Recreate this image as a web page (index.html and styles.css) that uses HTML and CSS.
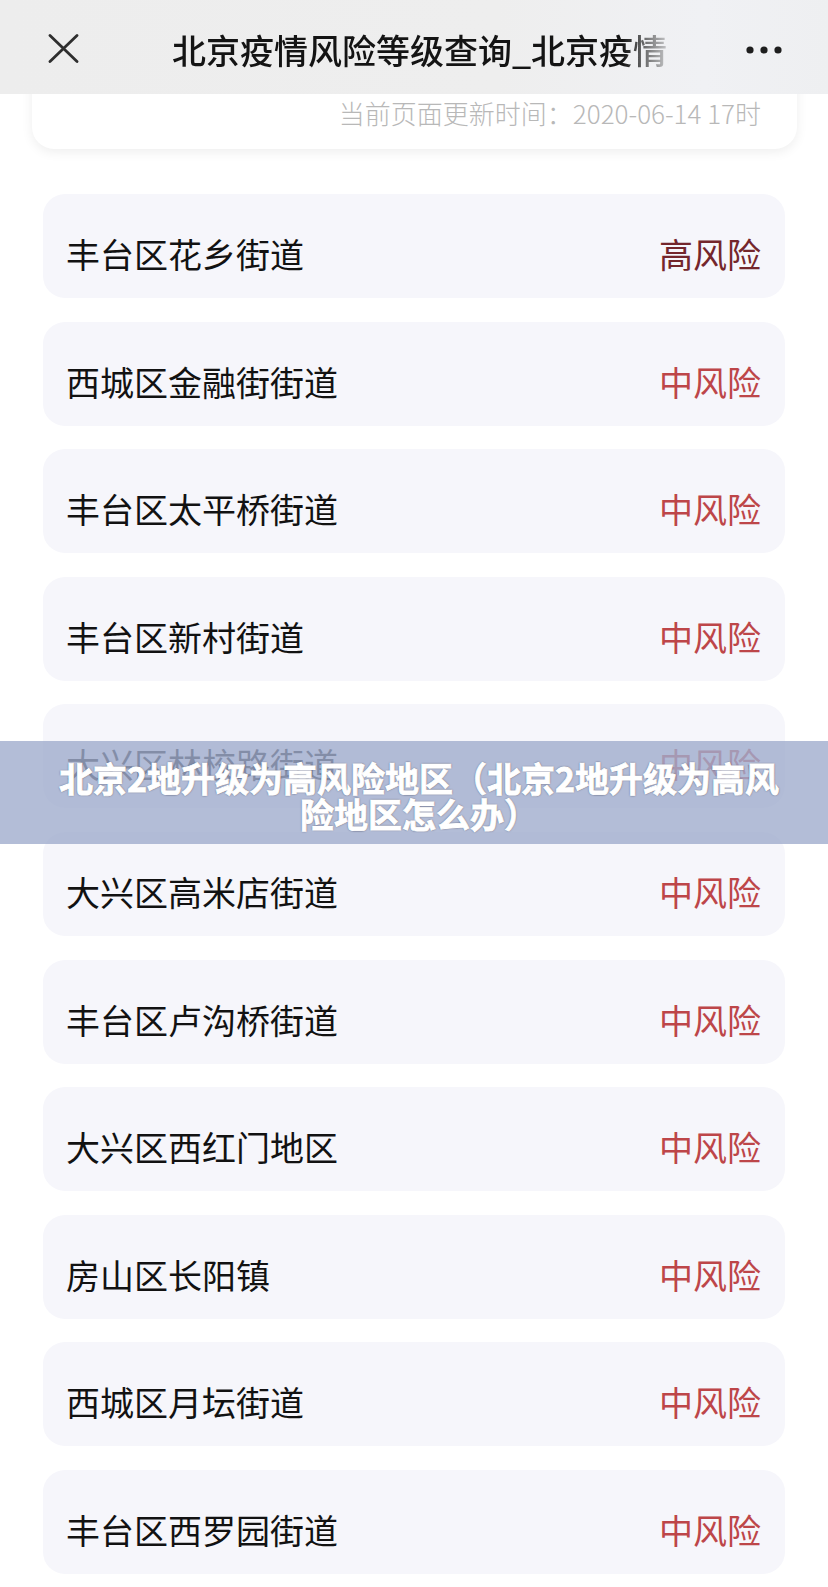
FILE: index.html
```html
<!DOCTYPE html>
<html lang="zh-CN">
<head>
    <meta charset="UTF-8">
    <meta name="viewport" content="width=device-width, initial-scale=1.0">
    <title>北京疫情风险等级查询</title>
    <link rel="stylesheet" href="styles.css">
</head>
<body>

<div class="topbar">
    <svg class="close-icon" width="31" height="29" viewBox="0 0 31 29">
        <path d="M2 1.5 L29 27.5 M29 1.5 L2 27.5" stroke="#2e2e2e" stroke-width="2.8" stroke-linecap="round" fill="none"/>
    </svg>
    <div class="title">北京疫情风险等级查询_北京疫情</div>
    <svg class="more-icon" width="36" height="8" viewBox="0 0 36 8">
        <circle cx="4" cy="4" r="3.6" fill="#1e1e1e"/>
        <circle cx="18" cy="4" r="3.6" fill="#1e1e1e"/>
        <circle cx="32" cy="4" r="3.6" fill="#1e1e1e"/>
    </svg>
</div>

<div class="update-card">
    <p class="update-time">当前页面更新时间：2020-06-14 17时</p>
</div>

<ul class="area-list" id="area-list">
    <!-- rows are inserted by the script below -->
</ul>

<div class="banner">北京2地升级为高风险地区（北京2地升级为高风险地区怎么办）</div>

<script>
    // Areas shown on the page
    const areas = [
        { name: "丰台区花乡街道", level: "高风险" },
        { name: "西城区金融街街道", level: "中风险" },
        { name: "丰台区太平桥街道", level: "中风险" },
        { name: "丰台区新村街道", level: "中风险" },
        { name: "大兴区林校路街道", level: "中风险" },
        { name: "大兴区高米店街道", level: "中风险" },
        { name: "丰台区卢沟桥街道", level: "中风险" },
        { name: "大兴区西红门地区", level: "中风险" },
        { name: "房山区长阳镇", level: "中风险" },
        { name: "西城区月坛街道", level: "中风险" },
        { name: "丰台区西罗园街道", level: "中风险" }
    ];

    const list = document.getElementById("area-list");
    areas.forEach(area => {
        const row = document.createElement("li");
        row.className = "area-row";
        const levelClass = area.level === "高风险" ? "level high" : "level mid";
        row.innerHTML = `
            <span class="area-name">${area.name}</span>
            <span class="${levelClass}">${area.level}</span>
        `;
        list.appendChild(row);
    });
</script>

</body>
</html>
```

FILE: styles.css
```css
body {
    font-family: "Noto Sans CJK SC", "Noto Sans", sans-serif;
    background-color: #ffffff;
    margin: 0;
    padding: 0;
    position: relative;
    color: #111111;
}
.topbar {
    position: relative;
    z-index: 2;
    height: 94px;
    box-sizing: border-box;
    padding-top: 6px;
    display: flex;
    align-items: center;
    background: linear-gradient(to right, #ededed 0%, #eeeeee 60%, #f0f1f4 85%, #eeeff1 100%);
}
.close-icon {
    margin-left: 48px;
    margin-top: -3px;
    flex-shrink: 0;
}
.title {
    margin-left: 93px;
    white-space: nowrap;
    font-size: 34px;
    font-weight: 500;
    color: #141414;
    line-height: 44px;
    -webkit-mask-image: linear-gradient(to right, #000 91%, rgba(0, 0, 0, 0.2) 100%);
    mask-image: linear-gradient(to right, #000 91%, rgba(0, 0, 0, 0.2) 100%);
}
.more-icon {
    margin-left: auto;
    margin-right: 46px;
    flex-shrink: 0;
}
.update-card {
    position: relative;
    z-index: 1;
    margin: -40px 31px 0 32px;
    padding: 42px 36px 19px 0;
    background-color: #ffffff;
    border-radius: 0 0 22px 22px;
    box-shadow: 0 3px 12px rgba(0, 0, 0, 0.07);
}
.update-time {
    margin: 0;
    text-align: right;
    font-size: 26px;
    font-weight: 300;
    line-height: 34px;
    color: #b8b8b8;
}
.area-list {
    list-style: none;
    margin: 45px 43px 0 43px;
    padding: 0;
    display: flex;
    flex-direction: column;
    gap: 23.6px;
}
.area-row {
    height: 104px;
    box-sizing: border-box;
    padding: 16px 24px 0 23px;
    display: flex;
    align-items: center;
    justify-content: space-between;
    background-color: #f6f6fb;
    border-radius: 22px;
    font-size: 34px;
    line-height: 44px;
}
.area-name {
    color: #121212;
}
.level.high {
    color: #74262c;
}
.level.mid {
    color: #bd4649;
}
.banner {
    position: absolute;
    top: 741px;
    left: 0;
    right: 0;
    height: 103px;
    box-sizing: border-box;
    padding: 19px 40px 0 50px;
    background-color: rgba(160, 172, 205, 0.8);
    color: #ffffff;
    font-size: 34px;
    font-weight: 700;
    line-height: 36px;
    text-align: center;
    -webkit-text-stroke: 0.9px #ffffff;
    text-shadow: 0 0 2px rgba(40, 40, 60, 0.75), 0 0 1px rgba(40, 40, 60, 0.75);
}
```
